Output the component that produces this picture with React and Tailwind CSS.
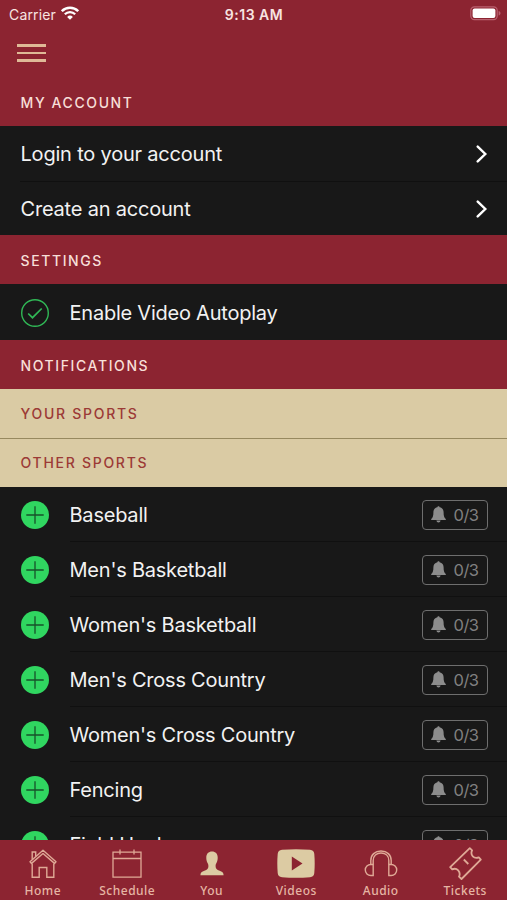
import React from "react";

const sports = [
  "Baseball",
  "Men's Basketball",
  "Women's Basketball",
  "Men's Cross Country",
  "Women's Cross Country",
  "Fencing",
  "Field Hockey",
];

const StatusBar = () => (
  <div className="grid h-7 grid-cols-3 items-center pl-[9px] pr-[6px] text-[14px] text-[#f8e4e1]">
    <div className="flex items-center gap-[5px]">
      <span className="tracking-[0.15px]">Carrier</span>
      <svg viewBox="0 0 18 14" className="mb-[3px] h-[14px] w-[18px]" fill="none">
        <path d="M.8 5.2a11.5 11.5 0 0 1 16.4 0" stroke="#fff" strokeWidth="2.5" />
        <path d="M3.8 8.3a7.3 7.3 0 0 1 10.4 0" stroke="#fff" strokeWidth="2.2" />
        <path d="M9 13.8 6.1 10.9a4.1 4.1 0 0 1 5.8 0Z" fill="#fff" />
      </svg>
    </div>
    <div className="pr-[2px] text-center font-semibold tracking-[0.5px]">9:13 AM</div>
    <div className="mb-[2px] flex justify-end">
      <svg viewBox="0 0 31 15" className="h-[15px] w-[31px]" fill="none">
        <rect x="0.8" y="0.8" width="26.4" height="12.9" rx="3.6" stroke="#b9606f" strokeWidth="1.2" />
        <rect x="2.6" y="2.6" width="22.8" height="9.3" rx="2" fill="#fff" />
        <path d="M28.6 5v4.5c1.3-.4 1.9-1.2 1.9-2.25S29.9 5.4 28.6 5Z" fill="#b9606f" />
      </svg>
    </div>
  </div>
);

const SectionHeader = ({ title }) => (
  <div className="flex h-[49px] items-center bg-[#8c2431] px-[20.5px] pt-px text-[14px] font-medium tracking-[1.6px] text-[#f7dfd8]">
    {title}
  </div>
);

const SportsHeader = ({ title }) => (
  <div className="flex h-full items-center px-[20.5px] text-[14px] font-medium tracking-[1.72px] text-[#9c3a36]">
    {title}
  </div>
);

const LinkRow = ({ label }) => (
  <button className="flex h-full w-full items-center justify-between pl-[20.5px] pr-[19px] text-left">
    <span className="text-[20px] tracking-[-0.2px] text-[#f2f2f2]">{label}</span>
    <svg viewBox="0 0 12 18" className="h-[18px] w-[12px]" fill="none" stroke="#fff" strokeWidth="2.4">
      <path d="m1.7 1.6 7.6 7.4-7.6 7.4" strokeLinecap="round" />
    </svg>
  </button>
);

const Bell = () => (
  <svg viewBox="0 0 15 17" className="mb-[2px] h-[17px] w-[15px]" fill="#8c8c8c">
    <path d="M7.5.2c.7 0 1.1.5 1.1 1.1 2.6.5 4 2.4 4 4.9 0 3.600.6 5.500 2.200 6.700v1.200H.2v-1.200c1.600-1.200 2.200-3.100 2.200-6.700 0-2.500 1.400-4.400 4-4.900 0-.6.4-1.100 1.100-1.100Z" />
    <path d="M5.4 14.6h4.2c-.2 1.3-1 2-2.1 2s-1.9-.7-2.1-2Z" />
  </svg>
);

const SportRow = ({ name }) => (
  <div className="flex h-[55px] shrink-0 items-center pl-[20.5px]">
    <svg viewBox="0 0 28 28" className="h-7 w-7 shrink-0">
      <circle cx="14" cy="14" r="14" fill="#30d660" />
      <path d="M14 5.3v17.4M5.3 14h17.4" stroke="#17512a" strokeWidth="1.3" />
    </svg>
    <div className="ml-[21px] flex h-full flex-1 items-center justify-between border-b border-[#101010] pr-[19px] pt-[2px]">
      <span className="text-[20px] tracking-[-0.22px] text-[#f2f2f2]">{name}</span>
      <span className="flex h-[30px] w-[66px] items-center justify-center gap-[7px] rounded-[4px] border-[1.5px] border-[#6e6e6e] text-[16.5px] tracking-[-0.5px] text-[#808080]">
        <Bell />
        0/3
      </span>
    </div>
  </div>
);

const HomeIcon = () => (
  <svg viewBox="0 0 28 29" className="h-[29px] w-[28px]" fill="none" stroke="#dfa996" strokeWidth="1.4">
    <path d="M1 12.8 14 1.3l13 11.5-1.5 1.6L14 4.500 2.500 14.400Z" strokeLinejoin="round" />
    <path d="M3.200 10.500V3h3.500v4.500M3.200 14.500v13.700h7v-9.700h7.600v9.700h7V14.500" />
  </svg>
);

const CalendarIcon = () => (
  <svg viewBox="0 0 30 29" className="h-[29px] w-[30px]" fill="none" stroke="#dfa996" strokeWidth="1.3">
    <path d="M1 3.2h28v25H1zM1 9.5h28M8 .5v5M22 .5v5" />
  </svg>
);

const PersonIcon = () => (
  <svg viewBox="0 0 24 25" className="h-[25px] w-[24px]" fill="#dccba3">
    <path d="M12 .5c3.5 0 5.700 2.300 5.700 6.100 0 2.200-.3 3.700-1.100 5.200-.6 1.200-1 1.800-1 3.400 0 2.300 1.200 3.400 4 4.500 2.500 1 4 1.700 4 4.500H.4c0-2.800 1.500-3.500 4-4.500 2.800-1.100 4-2.200 4-4.500 0-1.600-.4-2.200-1-3.400-.8-1.500-1.100-3-1.100-5.200C6.300 2.800 8.500.5 12 .5Z" />
  </svg>
);

const VideoIcon = () => (
  <svg viewBox="0 0 38 29" className="h-[29px] w-[38px]">
    <path d="M5 .8Q19-.4 33 .8q4 .3 4.300 4.200.8 9.500 0 19-.3 3.900-4.300 4.200-14 1.200-28 0Q1 27.900.7 24q-.8-9.500 0-19Q1 1.100 5 .8Z" fill="#dccba3" />
    <path d="M14.800 7.500v14L25.500 14.500Z" fill="#8c2431" />
  </svg>
);

const AudioIcon = () => (
  <svg viewBox="0 0 34 27" className="h-[27px] w-[34px]" fill="none" stroke="#dfa996" strokeWidth="1.4">
    <path d="M6.800 14.500v-4C6.800 4.800 11 1 17 1s10.200 3.800 10.200 9.500v4" />
    <path d="M9.200 14.500v-4C9.200 6 12.400 3 17 3s7.800 3 7.800 7.500v4" />
    <path d="M9.200 14.500v11H6.800a5.500 5.500 0 0 1 0-11ZM24.800 14.500v11h2.400a5.500 5.500 0 0 0 0-11Z" />
  </svg>
);

const TicketIcon = () => (
  <svg viewBox="0 0 33 33" className="h-[33px] w-[33px]" fill="none" stroke="#dfa996" strokeWidth="1.8" strokeLinejoin="round">
    <path d="M20.800 1.200 1.200 20.200l2 2.200c2.200-1 4.400-.7 6 1s1.900 4 .8 6.300l2.500 2.300L31.800 12.600l-2-2.300c-2.400.9-4.500.6-6-1s-1.800-3.700-.7-5.900Z" />
    <path d="m14.800 12.500 4.500 4.500" />
  </svg>
);

const tabs = [
  { label: "Home", icon: <HomeIcon /> },
  { label: "Schedule", icon: <CalendarIcon /> },
  { label: "You", icon: <PersonIcon /> },
  { label: "Videos", icon: <VideoIcon /> },
  { label: "Audio", icon: <AudioIcon /> },
  { label: "Tickets", icon: <TicketIcon /> },
];

const App = () => {
  return (
    <div className="flex h-[900px] w-[507px] flex-col overflow-hidden bg-[#181818] font-['Inter',sans-serif]">
      {/* status + nav */}
      <div className="h-[77px] shrink-0 bg-[#8c2431]">
        <StatusBar />
        <button className="ml-[17px] mt-4 flex w-[29px] flex-col gap-[5px]" aria-label="Menu">
          <span className="h-[2.5px] w-full bg-[#dfb997]" />
          <span className="h-[2.5px] w-full bg-[#dfb997]" />
          <span className="h-[2.5px] w-full bg-[#dfb997]" />
        </button>
      </div>

      <div className="flex min-h-0 flex-1 flex-col overflow-hidden">
        <div className="shrink-0">
          <SectionHeader title="MY ACCOUNT" />
          <div className="h-[55px]">
            <LinkRow label="Login to your account" />
          </div>
          <div className="ml-[20px] h-px bg-[#101010]" />
          <div className="h-[53px]">
            <LinkRow label="Create an account" />
          </div>

          <SectionHeader title="SETTINGS" />
          <div className="flex h-[56px] items-center pl-[20.5px] pt-px">
            <svg viewBox="0 0 28 28" className="h-7 w-7" fill="none" stroke="#30b856">
              <circle cx="14" cy="14" r="13.3" strokeWidth="1.4" />
              <path d="m7.2 14.5 4.3 4.2 9.2-9.2" strokeWidth="1.7" />
            </svg>
            <span className="ml-[21px] text-[20px] tracking-[-0.23px] text-[#f2f2f2]">Enable Video Autoplay</span>
          </div>

          <SectionHeader title="NOTIFICATIONS" />
          <div className="h-[50px] border-b border-[#97895f] bg-[#dacba4]">
            <SportsHeader title="YOUR SPORTS" />
          </div>
          <div className="h-[48px] bg-[#dacba4] pb-px">
            <SportsHeader title="OTHER SPORTS" />
          </div>
        </div>

        {sports.map((name) => (
          <SportRow key={name} name={name} />
        ))}
      </div>

      {/* bottom tabs */}
      <div className="grid h-[60px] shrink-0 grid-cols-6 bg-[#8c2431]">
        {tabs.map((tab) => (
          <div key={tab.label} className="flex flex-col items-center pl-px">
            <div className="flex h-[43px] items-center justify-center pt-[3px]">{tab.icon}</div>
            <span className="font-['Noto_Sans',sans-serif] text-[12px] font-medium leading-[15px] tracking-[0.5px] text-[#e6b5a4]">
              {tab.label}
            </span>
          </div>
        ))}
      </div>
    </div>
  );
};

export default App;
